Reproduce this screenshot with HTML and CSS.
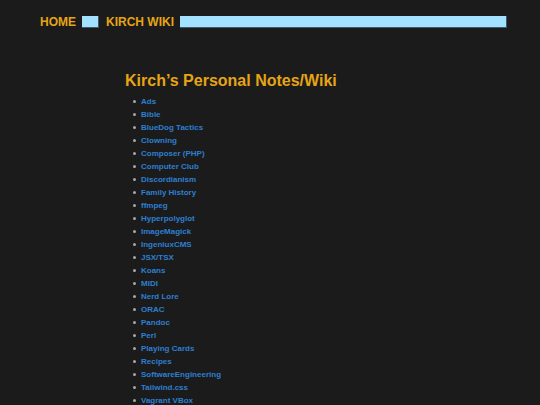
FILE: index.html
```html
<!DOCTYPE html>
<html lang="en">
<head>
<meta charset="utf-8">
<title>Kirch's Personal Notes/Wiki</title>
<link rel="stylesheet" href="styles.css">
</head>
<body>
<nav class="nav">
  <a class="nav-link" href="#">HOME</a>
  <span class="nav-sep nav-sep-small"></span>
  <a class="nav-link" href="#">KIRCH WIKI</a>
  <span class="nav-sep nav-sep-fill"></span>
</nav>
<main class="content">
  <h1 class="title">Kirch’s Personal Notes/Wiki</h1>
  <ul class="pages">
    <li><a href="#">Ads</a></li>
    <li><a href="#">Bible</a></li>
    <li><a href="#">BlueDog Tactics</a></li>
    <li><a href="#">Clowning</a></li>
    <li><a href="#">Composer (PHP)</a></li>
    <li><a href="#">Computer Club</a></li>
    <li><a href="#">Discordianism</a></li>
    <li><a href="#">Family History</a></li>
    <li><a href="#">ffmpeg</a></li>
    <li><a href="#">Hyperpolyglot</a></li>
    <li><a href="#">ImageMagick</a></li>
    <li><a href="#">IngeniuxCMS</a></li>
    <li><a href="#">JSX/TSX</a></li>
    <li><a href="#">Koans</a></li>
    <li><a href="#">MIDI</a></li>
    <li><a href="#">Nerd Lore</a></li>
    <li><a href="#">ORAC</a></li>
    <li><a href="#">Pandoc</a></li>
    <li><a href="#">Perl</a></li>
    <li><a href="#">Playing Cards</a></li>
    <li><a href="#">Recipes</a></li>
    <li><a href="#">SoftwareEngineering</a></li>
    <li><a href="#">Tailwind.css</a></li>
    <li><a href="#">Vagrant VBox</a></li>
  </ul>
</main>
</body>
</html>
```
FILE: styles.css
```css
html, body {
  margin: 0;
  padding: 0;
  background: #1b1b1b;
  font-family: "Liberation Sans", Arial, sans-serif;
}

.nav {
  display: flex;
  align-items: stretch;
  gap: 6px;
  padding: 16px 33px 0 40px;
  line-height: 12px;
  font-size: 12px;
  font-weight: bold;
}

.nav-link {
  color: #e6a514;
  text-decoration: none;
}

.nav-sep {
  height: 12px;
  box-sizing: border-box;
  background: #a3e2ff;
  border-right: 1px solid #3f5966;
  border-bottom: 1px solid #3f5966;
}

.nav-sep-small {
  width: 17px;
  margin-right: 1px;
}

.nav-sep-fill {
  flex: 1;
}

.content {
  width: 290px;
  margin: 44px auto 0;
}

.title {
  margin: 0;
  font-size: 16px;
  line-height: 18px;
  font-weight: bold;
  color: #e6a514;
}

.pages {
  margin: 5px 0 0;
  padding-left: 16px;
  list-style: none;
  font-size: 8px;
  line-height: 13px;
  font-weight: bold;
}

.pages li::before {
  content: "";
  display: inline-block;
  width: 3px;
  height: 3px;
  border-radius: 50%;
  background: #a8a8a8;
  margin-left: -8px;
  margin-right: 5px;
  vertical-align: 1px;
}

.pages a {
  color: #2d7fd2;
  text-decoration: none;
}
```
